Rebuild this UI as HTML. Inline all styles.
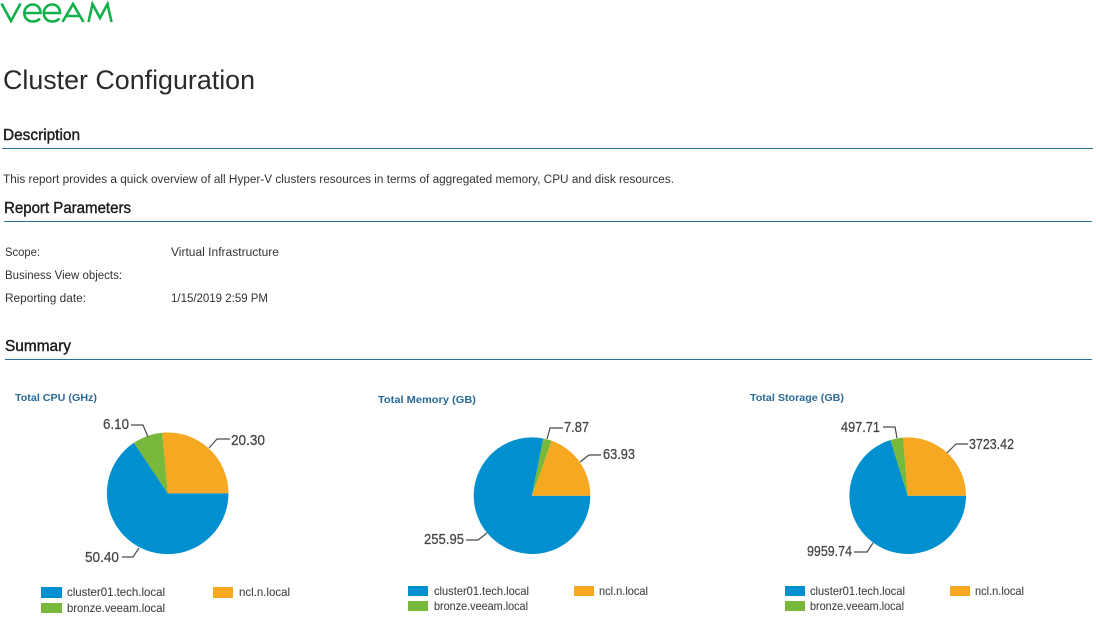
<!DOCTYPE html>
<html><head><meta charset="utf-8"><title>Cluster Configuration</title>
<style>
html,body{margin:0;padding:0;background:#fff;width:1096px;height:620px;overflow:hidden}
svg{display:block}
text{font-family:"Liberation Sans",sans-serif}
.b{font-size:11.5px;fill:#333}
.h{font-size:15.5px;fill:#1c1c1c;stroke:#1c1c1c;stroke-width:.4}
.t{font-size:10.5px;font-weight:bold;fill:#2a6a96}
.v{font-size:15px;fill:#444;stroke:#444;stroke-width:.25}
.l{font-size:12px;fill:#444;stroke:#444;stroke-width:.1}
.ld{fill:none;stroke:#4a4a4a;stroke-width:1.2}
</style></head><body>
<svg width="1096" height="620" viewBox="0 0 1096 620" xmlns="http://www.w3.org/2000/svg">
<rect width="1096" height="620" fill="#fff"/>
<g fill="none" stroke="#12b04a" stroke-width="2.6">
<path d="M1.500 3.500L11 21L20.500 3.500"/>
<path d="M25 13H40.500C40.500 7.500 36.800 4.500 32.700 4.500C28 4.500 24.300 8.300 24.300 13.200C24.300 18 28 21.500 32.800 21.500C35.700 21.500 38.200 20.500 40 18.500"/>
<path d="M44.500 13H60C60 7.500 56.300 4.500 52.200 4.500C47.500 4.500 43.800 8.300 43.800 13.200C43.800 18 47.500 21.500 52.300 21.500C55.200 21.500 57.700 20.500 59.500 18.500"/>
<path d="M62.500 22L73 4L83.500 22M66.500 16H80"/>
<path d="M88.500 22L92.500 4L100 18L107.500 4L111.500 22"/>
</g>
<text x="3" y="89" font-size="27" fill="#2a2a2a" textLength="252" lengthAdjust="spacingAndGlyphs">Cluster Configuration</text>

<text class="h" x="3" y="140" textLength="77" lengthAdjust="spacingAndGlyphs">Description</text>
<rect x="2" y="148" width="1091" height="1" fill="#2a7099"/>
<text class="b" x="3" y="183" textLength="671" lengthAdjust="spacingAndGlyphs">This report provides a quick overview of all Hyper-V clusters resources in terms of aggregated memory, CPU and disk resources.</text>
<text class="h" x="4" y="213" textLength="127" lengthAdjust="spacingAndGlyphs">Report Parameters</text>
<rect x="4" y="221" width="1088" height="1" fill="#2a7099"/>
<text class="b" x="5" y="256" textLength="35" lengthAdjust="spacingAndGlyphs">Scope:</text>
<text class="b" x="171" y="256" textLength="108" lengthAdjust="spacingAndGlyphs">Virtual Infrastructure</text>
<text class="b" x="5" y="279" textLength="117" lengthAdjust="spacingAndGlyphs">Business View objects:</text>
<text class="b" x="5" y="302" textLength="81" lengthAdjust="spacingAndGlyphs">Reporting date:</text>
<text class="b" x="171" y="302" textLength="97" lengthAdjust="spacingAndGlyphs">1/15/2019 2:59 PM</text>
<text class="h" x="5" y="351" textLength="66" lengthAdjust="spacingAndGlyphs">Summary</text>
<rect x="5" y="359" width="1087" height="1" fill="#2a7099"/>

<!-- CPU -->
<text class="t" x="15" y="401" textLength="82" lengthAdjust="spacingAndGlyphs">Total CPU (GHz)</text>
<path fill="#0090d0" d="M167.700 493.300H228.500A60.800 60.800 0 1 1 133.900 442.800Z"/>
<path fill="#f6a821" d="M167.700 493.300L162.200 432.700A60.800 60.800 0 0 1 228.500 493.300Z"/>
<path fill="#78b83a" d="M167.700 493.300L133.900 442.800A60.800 60.800 0 0 1 162.200 432.700Z"/>
<path class="ld" d="M131 425H143L148 437M209 448L217 439H230M139 548L133 557H122"/>
<text class="v" x="103" y="429" textLength="26" lengthAdjust="spacingAndGlyphs">6.10</text>
<text class="v" x="231" y="445" textLength="34" lengthAdjust="spacingAndGlyphs">20.30</text>
<text class="v" x="85" y="562" textLength="34" lengthAdjust="spacingAndGlyphs">50.40</text>
<rect x="41" y="587" width="21" height="11" fill="#0090d0"/>
<rect x="213" y="587" width="20" height="11" fill="#f6a821"/>
<rect x="41" y="603" width="21" height="10" fill="#78b83a"/>
<text class="l" x="67" y="596" textLength="98" lengthAdjust="spacingAndGlyphs">cluster01.tech.local</text>
<text class="l" x="239" y="596" textLength="51" lengthAdjust="spacingAndGlyphs">ncl.n.local</text>
<text class="l" x="67" y="612" textLength="98" lengthAdjust="spacingAndGlyphs">bronze.veeam.local</text>

<!-- Memory -->
<text class="t" x="378" y="403" textLength="98" lengthAdjust="spacingAndGlyphs">Total Memory (GB)</text>
<path fill="#0090d0" d="M532 495.700H590.300A58.300 58.300 0 1 1 543.200 438.500Z"/>
<path fill="#f6a821" d="M532 495.700L551.700 440.800A58.300 58.300 0 0 1 590.300 495.700Z"/>
<path fill="#78b83a" d="M532 495.700L543.200 438.500A58.300 58.300 0 0 1 551.700 440.800Z"/>
<path class="ld" d="M547 439L550 428H563M580 462L589 455H601M487 533L478 540H466"/>
<text class="v" x="564" y="432" textLength="25" lengthAdjust="spacingAndGlyphs">7.87</text>
<text class="v" x="603" y="459" textLength="32" lengthAdjust="spacingAndGlyphs">63.93</text>
<text class="v" x="424" y="544" textLength="40" lengthAdjust="spacingAndGlyphs">255.95</text>
<rect x="408" y="586" width="20" height="10" fill="#0090d0"/>
<rect x="574" y="586" width="20" height="10" fill="#f6a821"/>
<rect x="408" y="601" width="20" height="10" fill="#78b83a"/>
<text class="l" x="434" y="595" textLength="95" lengthAdjust="spacingAndGlyphs">cluster01.tech.local</text>
<text class="l" x="599" y="595" textLength="49" lengthAdjust="spacingAndGlyphs">ncl.n.local</text>
<text class="l" x="434" y="610" textLength="94" lengthAdjust="spacingAndGlyphs">bronze.veeam.local</text>

<!-- Storage -->
<text class="t" x="750" y="401" textLength="94" lengthAdjust="spacingAndGlyphs">Total Storage (GB)</text>
<path fill="#0090d0" d="M907.700 495.700H966A58.300 58.300 0 1 1 890.500 440Z"/>
<path fill="#f6a821" d="M907.700 495.700L903.100 437.600A58.300 58.300 0 0 1 966 495.700Z"/>
<path fill="#78b83a" d="M907.700 495.700L890.500 440A58.300 58.300 0 0 1 903.100 437.600Z"/>
<path class="ld" d="M883 427H895L897 438M947 453L956 444H968M873 543L867 552H854"/>
<text class="v" x="841" y="432" textLength="39" lengthAdjust="spacingAndGlyphs">497.71</text>
<text class="v" x="969" y="449" textLength="45" lengthAdjust="spacingAndGlyphs">3723.42</text>
<text class="v" x="807" y="556" textLength="45" lengthAdjust="spacingAndGlyphs">9959.74</text>
<rect x="785" y="586" width="20" height="10" fill="#0090d0"/>
<rect x="950" y="586" width="20" height="10" fill="#f6a821"/>
<rect x="785" y="601" width="20" height="10" fill="#78b83a"/>
<text class="l" x="810" y="595" textLength="95" lengthAdjust="spacingAndGlyphs">cluster01.tech.local</text>
<text class="l" x="975" y="595" textLength="49" lengthAdjust="spacingAndGlyphs">ncl.n.local</text>
<text class="l" x="810" y="610" textLength="94" lengthAdjust="spacingAndGlyphs">bronze.veeam.local</text>
</svg>
</body></html>
